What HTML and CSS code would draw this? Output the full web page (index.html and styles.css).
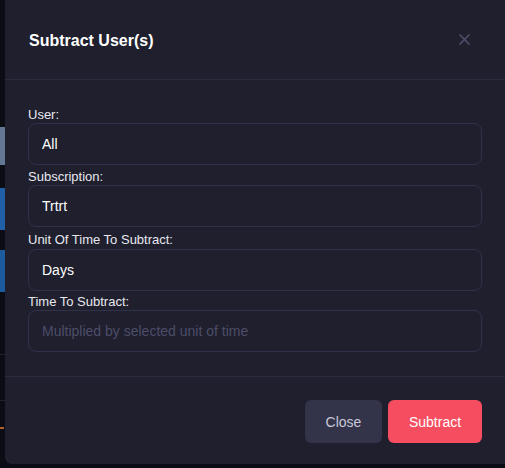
FILE: index.html
```html
<!DOCTYPE html>
<html>
<head>
<meta charset="utf-8">
<link rel="stylesheet" href="styles.css">
</head>
<body>
<div class="page">
  <div class="bg-gap" style="height:127px"></div>
  <div class="bg-block gray"></div>
  <div class="bg-gap" style="height:23px"></div>
  <div class="bg-block blue"></div>
  <div class="bg-gap" style="height:20px"></div>
  <div class="bg-block blue2"></div>
  <div class="bg-gap" style="height:62px"></div>
  <div class="bg-line"></div>
  <div class="bg-gap" style="height:45px"></div>
  <div class="bg-line"></div>
  <div class="bg-gap" style="height:26px"></div>
  <div class="bg-orange"></div>
</div>
<div class="modal">
  <div class="modal-header">
    <h2 class="modal-title">Subtract User(s)</h2>
    <svg class="close-x" width="11" height="11" viewBox="0 0 11 11"><path d="M0.5 0.5L10.5 10.5M10.5 0.5L0.5 10.5" stroke="currentColor" stroke-width="1.5" fill="none"/></svg>
  </div>
  <div class="modal-body">
    <label class="field-label">User:</label>
    <div class="field">All</div>
    <label class="field-label">Subscription:</label>
    <div class="field">Trtrt</div>
    <label class="field-label tall">Unit Of Time To Subtract:</label>
    <div class="field">Days</div>
    <label class="field-label short">Time To Subtract:</label>
    <div class="field placeholder">Multiplied by selected unit of time</div>
  </div>
  <div class="modal-footer">
    <button class="btn btn-close">Close</button>
    <button class="btn btn-primary">Subtract</button>
  </div>
</div>
</body>
</html>
```

FILE: styles.css
```css
html, body {
  margin: 0;
  padding: 0;
  width: 505px;
  height: 468px;
  overflow: hidden;
  background: #0c0d14;
  font-family: "Liberation Sans", Arial, sans-serif;
}
.page {
  display: flex;
  flex-direction: column;
  width: 505px;
}
.bg-block.gray { background: #647893; height: 38px; }
.bg-block.blue { background: #2060a6; height: 42px; }
.bg-block.blue2 { background: #1c5b9e; height: 42px; }
.bg-line {
  height: 1px;
  background: #20222e;
}
.bg-orange {
  width: 4px;
  height: 2px;
  background: #b0602a;
}
.modal {
  position: absolute;
  left: 5px;
  top: 0;
  width: 510px;
  height: 464px;
  background: #1f1f2e;
  border-radius: 0 0 7px 7px;
  display: flex;
  flex-direction: column;
  box-sizing: border-box;
}
.modal-header {
  height: 80px;
  flex: none;
  box-sizing: border-box;
  border-bottom: 1px solid #2c2c40;
  display: flex;
  align-items: center;
  justify-content: space-between;
  padding: 0 45px 0 24px;
}
.modal-title {
  margin: 0;
  color: #ffffff;
  font-size: 16px;
  font-weight: bold;
  padding-top: 2px;
}
.close-x {
  color: #50506c;
}
.modal-body {
  padding: 23px 28px 24px 23px;
  display: flex;
  flex-direction: column;
  border-bottom: 1px solid #2c2c40;
  width: 454px;
  flex: none;
}
.field-label {
  color: #e8e8ee;
  font-size: 13px;
  line-height: 16px;
  height: 16px;
  padding-top: 4px;
}
.field-label.tall {
  height: 17px;
  padding-top: 5px;
}
.field-label.short {
  height: 16px;
  padding-top: 3px;
}
.field {
  height: 42px;
  box-sizing: border-box;
  border: 1px solid #31314a;
  border-radius: 8px;
  padding: 0 13px;
  display: flex;
  align-items: center;
  color: #ffffff;
  font-size: 14px;
}
.field.placeholder {
  color: #4d4d68;
}
.modal-footer {
  display: flex;
  gap: 6px;
  padding: 23px 0 0 300px;
}
.btn {
  height: 43px;
  border: none;
  border-radius: 6px;
  font-family: "Liberation Sans", Arial, sans-serif;
  font-size: 14px;
  padding: 0;
}
.btn-close {
  width: 77px;
  background: #33334a;
  color: #c9c9d8;
}
.btn-primary {
  width: 94px;
  background: #f64e60;
  color: #ffffff;
}
```
